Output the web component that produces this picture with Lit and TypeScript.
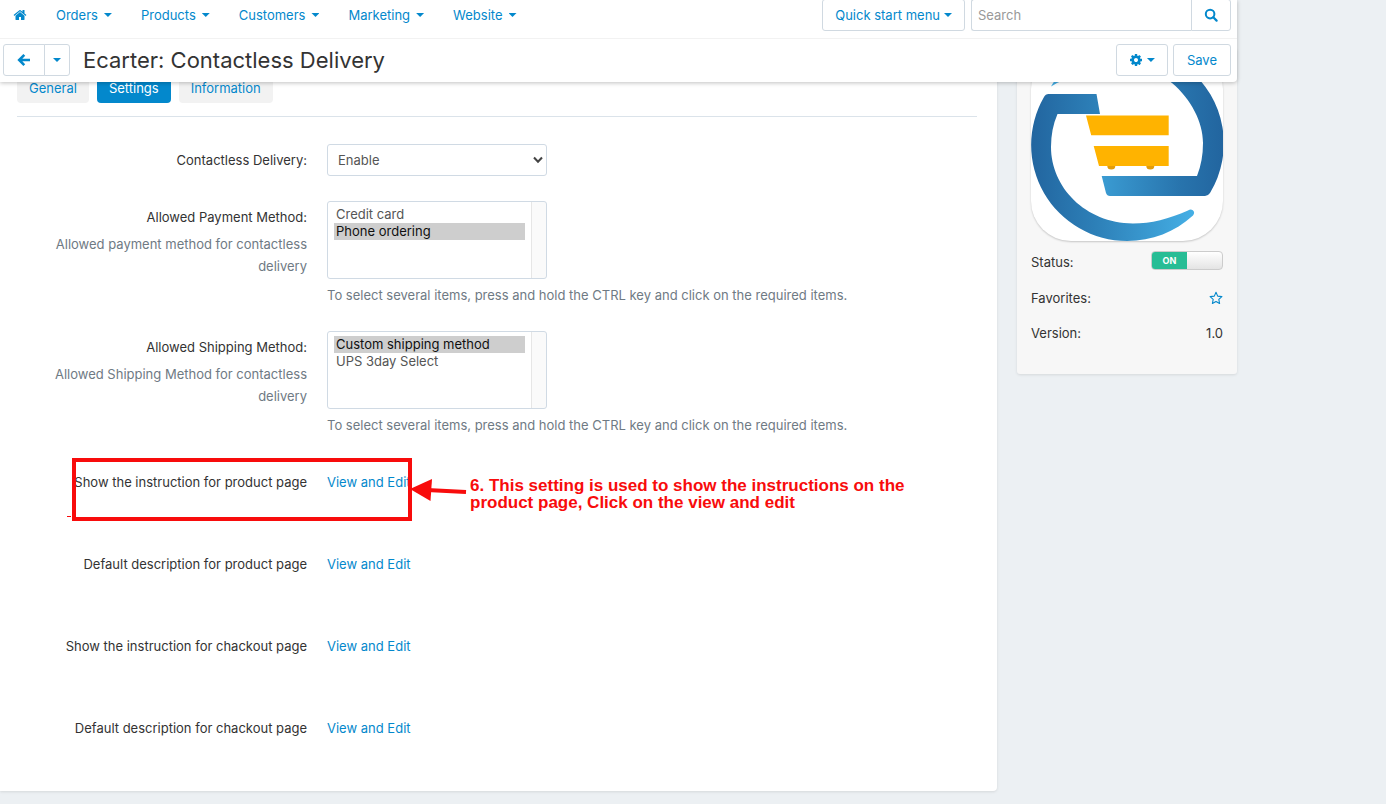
import { LitElement, html, css, svg, nothing } from "lit";
import { customElement, state } from "lit/decorators.js";

const icons = {
  home: svg`<svg class="icon" viewBox="0 0 1792 1792" aria-hidden="true"><path fill="currentColor" d="M1472 992v480q0 26-19 45t-45 19h-384v-384h-256v384h-384q-26 0-45-19t-19-45v-480q0-1 .5-3t.5-3l575-474 575 474q1 2 1 6zm223-69l-62 74q-8 9-21 11h-3q-13 0-21-7l-692-577-692 577q-12 8-24 7-13-2-21-11l-62-74q-8-10-7-23.500t11-21.500l719-599q32-26 76-26t76 26l244 204v-195q0-14 9-23t23-9h192q14 0 23 9t9 23v408l219 182q10 8 11 21.500t-7 23.500z"/></svg>`,
  back: svg`<svg class="icon" viewBox="0 0 14 14" aria-hidden="true"><path d="M13 7H3M7.300 1.900L2.200 7l5.100 5.100" fill="none" stroke="currentColor" stroke-width="2.600"/></svg>`,
  cog: svg`<svg class="icon" viewBox="0 0 1792 1792" aria-hidden="true"><path fill="currentColor" d="M1152 896q0-106-75-181t-181-75-181 75-75 181 75 181 181 75 181-75 75-181zm512-109v222q0 12-8 23t-20 13l-185 28q-19 54-39 91 35 50 107 138 10 12 10 25t-9 23q-27 37-99 108t-94 71q-12 0-26-9l-138-108q-44 23-91 38-16 136-29 186-7 28-36 28h-222q-14 0-24.500-8.500t-11.500-21.500l-28-184q-49-16-90-37l-141 107q-10 9-25 9-14 0-25-11-126-114-165-168-7-10-7-23 0-12 8-23 15-21 51-66.500t54-70.500q-27-50-41-99l-183-27q-13-2-21-12.500t-8-23.500v-222q0-12 8-23t19-13l186-28q14-46 39-92-40-57-107-138-10-12-10-24 0-10 9-23 26-36 98.500-107.500t94.500-71.500q13 0 26 10l138 107q44-23 91-38 16-136 29-186 7-28 36-28h222q14 0 24.500 8.500t11.500 21.500l28 184q49 16 90 37l142-107q9-9 24-9 13 0 25 10 129 119 165 170 7 8 7 22 0 12-8 23-15 21-51 66.500t-54 70.500q26 50 41 98l183 28q13 2 21 12.500t8 23.500z"/></svg>`,
  search: svg`<svg class="icon" viewBox="0 0 14 14" aria-hidden="true"><circle cx="6.100" cy="6.100" r="4.300" fill="none" stroke="currentColor" stroke-width="2"/><path d="M9.300 9.300L12.600 12.600" stroke="currentColor" stroke-width="2.200" stroke-linecap="round"/></svg>`,
  star: svg`<svg class="icon" viewBox="0 0 14 14" aria-hidden="true"><path d="M7 1.300l1.700 3.800 4.200.5-3.100 2.800.8 4.100L7 10.500l-3.600 2 .8-4.100L1.100 5.600l4.200-.5z" fill="none" stroke="currentColor" stroke-width="1.100" stroke-linejoin="round"/></svg>`,
};

const logo = html`<svg class="logo" viewBox="0 0 192 192" role="img" aria-label="Ecarter">
  <defs>
    <linearGradient id="left" gradientUnits="userSpaceOnUse" x1="0" y1="0" x2="163" y2="0">
      <stop offset="0" stop-color="#22659f" /><stop offset="0.400" stop-color="#2d80b8" /><stop offset="1" stop-color="#45afe5" />
    </linearGradient>
    <linearGradient id="right" gradientUnits="userSpaceOnUse" x1="192" y1="0" x2="20" y2="0">
      <stop offset="0" stop-color="#22659f" /><stop offset="0.250" stop-color="#2874ad" /><stop offset="0.700" stop-color="#3a9bd2" /><stop offset="1" stop-color="#45afe5" />
    </linearGradient>
  </defs>
  <path fill="url(#left)" d="M69 65L65.500 45H17.500Q14.500 45 13 48A96 96 0 0 0 96 192C121 192 144 183 162 166.500Q164.500 163 161.500 161Q159.500 160 157 161.500C138 170 120 174.500 102 174.500C54 174 20 138 20 98Q20 80 26.500 65Z" />
  <path fill="url(#right)" d="M70.700 127H166Q172 112 172 94C172 73 160 50 141 34C125 21 108 16 88 17C64 19 42 27 26 34L20 37.500Q24 30 31 24.500A96 96 0 0 1 179 144Q177 147 174 147H79Q76 147 75 144Z" />
  <path fill="#ffb300" d="M55 66.500H137.700V86.300H60.200ZM62.700 97H137.700V117H68Z" />
  <path fill="#e29c0a" d="M76.300 117h8a4 3.600 0 0 1-8 0zM115.300 117h8a4 3.600 0 0 1-8 0z" />
</svg>`;

interface Setting {
  id: string;
  label: string;
  note?: string;
  options: string[];
  chosen: string;
}

const multiSettings: Setting[] = [
  {
    id: "payment",
    label: "Allowed Payment Method:",
    note: "Allowed payment method for contactless delivery",
    options: ["Credit card", "Phone ordering"],
    chosen: "Phone ordering",
  },
  {
    id: "shipping",
    label: "Allowed Shipping Method:",
    note: "Allowed Shipping Method for contactless delivery",
    options: ["Custom shipping method", "UPS 3day Select"],
    chosen: "Custom shipping method",
  },
];

const linkSettings = [
  "Show the instruction for product page",
  "Default description for product page",
  "Show the instruction for chackout page",
  "Default description for chackout page",
];

@customElement("app-root")
export class AppRoot extends LitElement {
  @state() private enabled = true;
  @state() private tab = "Settings";

  static styles = css`
    :host {
      display: block;
      min-height: 100vh;
      background: #ecf0f3;
      color: #333;
      font: 13px/22px Inter, "Liberation Sans", sans-serif;
      overflow: hidden;
    }
    *, *::before, *::after { box-sizing: border-box; }
    a { color: #0388cc; text-decoration: none; }
    button, input, select { font: inherit; margin: 0; }
    .icon { display: block; width: 14px; height: 14px; flex: none; }
    .page { max-width: 1237px; }
    .header {
      position: sticky;
      top: 0;
      z-index: 2;
      background: #fff;
      border-radius: 0 0 4px 0;
      box-shadow: 0 1px 4px rgba(0, 0, 0, 0.25);
    }
    .bar { display: flex; align-items: center; padding: 0 6px 0 3px; }
    .nav { height: 39px; padding-bottom: 8px; border-bottom: 1px solid #f2f2f2; }
    .menu { display: flex; align-items: center; flex: 1; gap: 29px; padding-left: 10px; }
    .menu a { display: flex; align-items: center; gap: 6px; }
    .caret {
      width: 8px;
      height: 4px;
      background: currentColor;
      clip-path: polygon(0 0, 100% 0, 50% 100%);
    }
    .btn {
      display: inline-flex;
      align-items: center;
      justify-content: center;
      height: 32px;
      padding: 0 13px;
      border: 1px solid #d0d9e1;
      border-radius: 3px;
      background: #fff;
      color: #0388cc;
      cursor: pointer;
    }
    .quick { gap: 4px; padding: 0 12px; margin-right: 6px; }
    .search { display: flex; width: 260px; }
    .search input {
      flex: 1;
      min-width: 0;
      height: 32px;
      padding: 0 6px;
      border: 1px solid #d0d9e1;
      border-right: 0;
      border-radius: 3px 0 0 3px;
      background: #fff;
      outline: 0;
    }
    .search input::placeholder { color: #999; }
    .search .btn { width: 40px; padding: 0; border-radius: 0 3px 3px 0; }
    .titlebar { padding-top: 5px; padding-bottom: 6px; gap: 5px; }
    .split { display: flex; }
    .split .btn:first-child { width: 42px; border-radius: 3px 0 0 3px; }
    .split .btn:last-child { width: 26px; padding: 0; margin-left: -1px; border-radius: 0 3px 3px 0; }
    h1 { flex: 1; margin: 0 0 0 8px; font-size: 22px; line-height: 32px; font-weight: 400; }
    .tools { gap: 4px; padding: 0 12px; }
    .columns { display: flex; align-items: flex-start; gap: 20px; margin-top: -33px; }
    .panel {
      flex: 1;
      min-width: 0;
      padding: 24px 20px 27px 17px;
      background: #fff;
      border-radius: 0 0 4px 0;
      box-shadow: 0 1px 3px rgba(0, 0, 0, 0.1);
    }
    .tabs {
      display: flex;
      gap: 8px;
      padding-bottom: 13px;
      margin-bottom: 27px;
      border-bottom: 1px solid #dbe3ea;
    }
    .tab {
      height: 30px;
      padding: 0 12px 1px;
      border: 0;
      border-radius: 4px;
      background: #f2f2f2;
      color: #0388cc;
      cursor: pointer;
    }
    .tab.active { background: #0388cc; color: #fff; }
    .form { display: flex; flex-direction: column; gap: 25px; }
    .row { display: grid; grid-template-columns: 290px minmax(0, 1fr); column-gap: 20px; position: relative; }
    .name { padding-top: 5px; text-align: right; }
    .name label, .name span { display: block; }
    .note { margin: 5px 0 0; color: #6f7a84; }
    .link-row { min-height: 57px; padding-top: 5px; }
    .value { padding-top: 5px; }
    select {
      display: block;
      width: 220px;
      border: 1px solid #d0dae4;
      border-radius: 3px;
      background-color: #fff;
      color: #555;
      outline: 0;
    }
    .single {
      height: 32px;
      padding: 0 10px;
      appearance: none;
      background-image: url("data:image/svg+xml,%3Csvg xmlns='http://www.w3.org/2000/svg' width='10' height='8'%3E%3Cpath d='M1 1.500L5 5.800L9 1.500' fill='none' stroke='%23444' stroke-width='2'/%3E%3C/svg%3E");
      background-repeat: no-repeat;
      background-position: right 3px center;
    }
    .multi {
      height: 78px;
      padding: 4px 21px 4px 6px;
      line-height: 17px;
      background-image: linear-gradient(to right, #e6e6e6 1px, #fafafa 1px);
      background-repeat: no-repeat;
      background-size: 15px 100%;
      background-position: right top;
    }
    .multi option { height: 17px; min-height: 17px; padding: 0 2px; line-height: 17px; }
    .callout { position: absolute; left: 50px; top: -3px; width: 840px; height: 63px; pointer-events: none; }
    .callout svg { position: absolute; left: 0; top: 0; width: 400px; height: 63px; }
    .callout p {
      position: absolute;
      left: 403px;
      top: 19px;
      margin: 0;
      width: 450px;
      color: #f80c0c;
      font: bold 17px/17px "Liberation Sans", Arial, sans-serif;
    }
    .side {
      width: 220px;
      flex: none;
      padding: 0 14px 30px;
      background: #f7f7f7;
      border-radius: 0 0 3px 3px;
      box-shadow: 0 1px 3px rgba(0, 0, 0, 0.1);
    }
    .logo {
      display: block;
      width: 100%;
      background: #fff;
      border-radius: 40px;
      box-shadow: 0 1px 2px rgba(0, 0, 0, 0.2);
    }
    .facts { display: flex; flex-direction: column; gap: 13px; margin: 9px 0 0; }
    .fact { display: flex; align-items: center; justify-content: space-between; }
    .fact:first-child { min-height: 24px; }
    .fact dd { margin: 0; }
    .star { display: block; padding: 0; border: 0; background: none; color: #0388cc; cursor: pointer; }
    .switch {
      display: flex;
      position: relative;
      width: 72px;
      height: 19px;
      margin-bottom: 4px;
      overflow: hidden;
      border: 1px solid #ccc;
      border-radius: 4px;
      background: linear-gradient(#fff, #e4e4e4);
    }
    .switch input { position: absolute; inset: 0; width: 100%; height: 100%; opacity: 0; cursor: pointer; }
    .switch span {
      width: 35px;
      background: #27bd95;
      color: #fff;
      font-size: 9px;
      line-height: 17px;
      font-weight: 700;
      text-align: center;
    }
    .switch .off { margin-left: auto; background: #999; }
  `;

  private renderCallout() {
    return html`<div class="callout">
      <svg viewBox="0 0 400 63" aria-hidden="true">
        <rect x="7" y="2" width="336" height="59" fill="none" stroke="#f80c0c" stroke-width="4" />
        <path d="M0 58.500h4" stroke="#f80c0c" />
        <path d="M399 34L360 32" stroke="#f80c0c" stroke-width="4" />
        <path d="M343 31L365 21L363.500 43Z" fill="#f80c0c" />
      </svg>
      <p>6. This setting is used to show the instructions on the product page, Click on the view and edit</p>
    </div>`;
  }

  render() {
    return html`<div class="page">
      <header class="header">
        <div class="bar nav">
          <nav class="menu" aria-label="Main">
            <a href="#home" aria-label="Home">${icons.home}</a>
            ${["Orders", "Products", "Customers", "Marketing", "Website"].map(
              (m) => html`<a href="#${m}">${m}<i class="caret"></i></a>`
            )}
          </nav>
          <button class="btn quick">Quick start menu<i class="caret"></i></button>
          <form class="search" @submit=${(e: Event) => e.preventDefault()}>
            <input type="text" placeholder="Search" aria-label="Search" />
            <button class="btn" aria-label="Search">${icons.search}</button>
          </form>
        </div>
        <div class="bar titlebar">
          <div class="split">
            <button class="btn" aria-label="Back">${icons.back}</button>
            <button class="btn" aria-label="More"><i class="caret"></i></button>
          </div>
          <h1>Ecarter: Contactless Delivery</h1>
          <button class="btn tools" aria-label="Tools">${icons.cog}<i class="caret"></i></button>
          <button class="btn">Save</button>
        </div>
      </header>
      <div class="columns">
        <main class="panel">
          <div class="tabs" role="tablist">
            ${["General", "Settings", "Information"].map(
              (t) => html`<button
                class="tab ${t === this.tab ? "active" : ""}"
                role="tab"
                aria-selected=${t === this.tab}
                @click=${() => (this.tab = t)}
              >${t}</button>`
            )}
          </div>
          <div class="form">
            <div class="row">
              <div class="name"><label for="delivery">Contactless Delivery:</label></div>
              <select id="delivery" class="single"><option>Enable</option><option>Disable</option></select>
            </div>
            ${multiSettings.map(
              (s) => html`<div class="row">
                <div class="name">
                  <label for=${s.id}>${s.label}</label>
                  <p class="note">${s.note}</p>
                </div>
                <div>
                  <select id=${s.id} class="multi" multiple size="4">
                    ${s.options.map((o) => html`<option ?selected=${o === s.chosen}>${o}</option>`)}
                  </select>
                  <p class="note">To select several items, press and hold the CTRL key and click on the required items.</p>
                </div>
              </div>`
            )}
            ${linkSettings.map(
              (label, i) => html`<div class="row link-row">
                <div class="name"><span>${label}</span></div>
                <div class="value"><a href="#edit-${i}">View and Edit</a></div>
                ${i === 0 ? this.renderCallout() : nothing}
              </div>`
            )}
          </div>
        </main>
        <aside class="side">
          ${logo}
          <dl class="facts">
            <div class="fact">
              <dt>Status:</dt>
              <dd>
                <label class="switch">
                  <input
                    type="checkbox"
                    aria-label="Status"
                    .checked=${this.enabled}
                    @change=${() => (this.enabled = !this.enabled)}
                  />
                  <span class=${this.enabled ? "" : "off"}>${this.enabled ? "ON" : "OFF"}</span>
                </label>
              </dd>
            </div>
            <div class="fact">
              <dt>Favorites:</dt>
              <dd><button class="star" aria-label="Add to favorites">${icons.star}</button></dd>
            </div>
            <div class="fact"><dt>Version:</dt><dd>1.0</dd></div>
          </dl>
        </aside>
      </div>
    </div>`;
  }
}
